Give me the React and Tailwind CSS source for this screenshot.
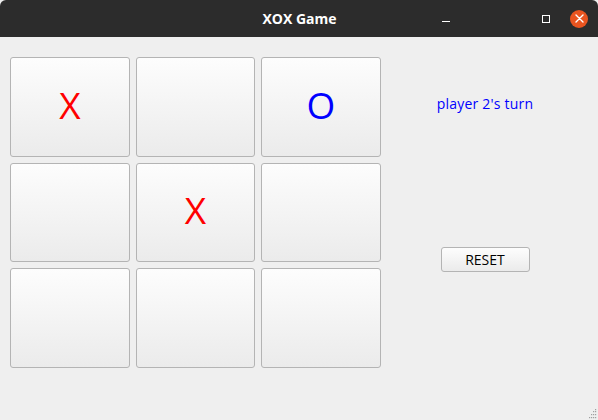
import React from 'react';

const cells = [
  { v: 'X', c: 'text-[#ff0000]' },
  { v: '', c: '' },
  { v: 'O', c: 'text-[#0000ff]' },
  { v: '', c: '' },
  { v: 'X', c: 'text-[#ff0000]' },
  { v: '', c: '' },
  { v: '', c: '' },
  { v: '', c: '' },
  { v: '', c: '' },
];

export default function App() {
  return (
    <div className="w-[598px] h-[420px] flex flex-col bg-[#efefef] overflow-hidden" style={{ fontFamily: '"Open Sans", "DejaVu Sans", sans-serif' }}>
      {/* title bar */}
      <div className="h-[37px] bg-[#2c2c2c] rounded-t-[6px] flex items-center relative shrink-0">
        <div className="flex-1 text-center text-white font-bold text-[14px] pl-[1px]">XOX Game</div>
        <div className="absolute right-0 top-0 h-full flex items-center">
          <div className="w-[8px] h-[1.5px] bg-white mr-[92px] mt-[6px]" />
          <div className="w-[8px] h-[8px] border border-white mr-[20px]" />
          <div className="w-[18px] h-[18px] rounded-full bg-[#e95420] flex items-center justify-center mr-[10px]">
            <svg width="9" height="9" viewBox="0 0 9 9">
              <path d="M1 1L8 8M8 1L1 8" stroke="white" strokeWidth="1.4" strokeLinecap="round" />
            </svg>
          </div>
        </div>
      </div>

      {/* content */}
      <div className="flex-1 flex relative">
        <div className="pl-[10px] pt-[20px] grid grid-cols-[120px_119px_120px] grid-rows-[100px_99px_100px] gap-x-[6px] gap-y-[6px]">
          {cells.map((cell, i) => (
            <button
              key={i}
              className={`rounded-[3px] border border-[#b4b4b4] bg-gradient-to-b from-[#fdfdfd] to-[#ebebeb] flex items-center justify-center text-[37px] leading-none pb-[6px] ${cell.c}`}
            >
              {cell.v}
            </button>
          ))}
        </div>

        <div className="w-[208px] flex flex-col items-center">
          <div className="mt-[56px] text-[14px] text-[#0000ff] tracking-[0.2px]">player 2's turn</div>
          <button className="mt-[133px] w-[89px] h-[25px] rounded-[3px] border border-[#b4b4b4] bg-gradient-to-b from-[#fdfdfd] to-[#ebebeb] text-[14px] text-black">
            RESET
          </button>
        </div>

        <svg className="absolute right-[1px] bottom-[1px]" width="12" height="12" viewBox="0 0 12 12">
          {[[10, 2], [8, 4], [10, 4], [6, 7], [8, 7], [10, 7], [4, 10], [6, 10], [8, 10], [10, 10]].map(([x, y], i) => (
            <rect key={i} x={x} y={y} width="1.2" height="1.2" fill="#a0a0a0" />
          ))}
        </svg>
      </div>
    </div>
  );
}
